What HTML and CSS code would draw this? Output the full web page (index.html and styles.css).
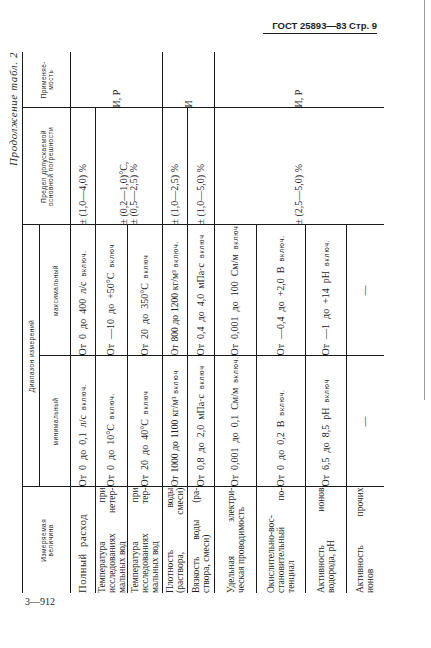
FILE: index.html
```html
<!DOCTYPE html>
<html lang="ru">
<head>
<meta charset="utf-8">
<title>ГОСТ 25893—83 Стр. 9</title>
<link rel="stylesheet" href="styles.css">
</head>
<body>
<div class="page">
  <div class="content">
    <div class="doc-head">ГОСТ 25893—83 Стр. 9</div>
    <div class="sheet">
      <div class="frame">
        <div class="caption">Продолжение табл. 2</div>
        <table class="tbl">
          <colgroup>
            <col class="w-name"><col class="w-min"><col class="w-max"><col class="w-err"><col class="w-use">
          </colgroup>
          <thead>
            <tr class="rh1">
              <th rowspan="2" class="hname">Измеряемая<br>величина</th>
              <th colspan="2" class="hrange">Диапазон измерений</th>
              <th rowspan="2" class="herr">Предел допускаемой<br>основной погрешности</th>
              <th rowspan="2" class="huse">Применяе-<br>мость</th>
            </tr>
            <tr class="rh2">
              <th class="hsub">минимальный</th>
              <th class="hsub">максимальный</th>
            </tr>
          </thead>
          <tbody>
            <tr class="r1">
              <td class="name"><span class="big">Полный расход</span></td>
              <td class="rng r1min">От 0 до 0,1 л/с <span class="v">включ.</span></td>
              <td class="rng">От 0 до 400 л/с <span class="v">включ.</span></td>
              <td class="err">± (1,0—4,0) %</td>
              <td class="use" rowspan="3">И, Р</td>
            </tr>
            <tr class="r2">
              <td class="name"><span class="j">Температура при</span><span class="j">исследованиях нетер-</span><span class="l">мальных вод</span></td>
              <td class="rng">От 0 до 10°С <span class="v">включ.</span></td>
              <td class="rng">От —10 до +50°С <span class="v">включ</span></td>
              <td class="err" rowspan="2"><span class="l">± (0,2—1,0)°С,</span><span class="l">± (0,5—2,5) %</span></td>
            </tr>
            <tr class="r3">
              <td class="name"><span class="j">Температура при</span><span class="j">исследованиях тер-</span><span class="l">мальных вод</span></td>
              <td class="rng">От 20 до 40°С <span class="v">включ</span></td>
              <td class="rng">От 20 до 350°С <span class="v">включ</span></td>
            </tr>
            <tr class="r4">
              <td class="name"><span class="j">Плотность воды</span><span class="j">(раствора, смеси)</span></td>
              <td class="rng tight">От 1000 до 1100 кг/м³ <span class="v">включ</span></td>
              <td class="rng tight">От 800 до 1200 кг/м³ <span class="v">включ.</span></td>
              <td class="err">± (1,0—2,5) %</td>
              <td class="use" rowspan="2">И</td>
            </tr>
            <tr class="r5">
              <td class="name"><span class="j">Вязкость воды (ра-</span><span class="l">створа, смеси)</span></td>
              <td class="rng">От 0,8 до 2,0 мПа·с <span class="v">включ</span></td>
              <td class="rng">От 0,4 до 4,0 мПа·с <span class="v">включ</span></td>
              <td class="err">± (1,0—5,0) %</td>
            </tr>
            <tr class="r6">
              <td class="name"><span class="j">Удельная электри-</span><span class="l">ческая проводимость</span></td>
              <td class="rng">От 0,001 до 0,1 См/м <span class="v">включ.</span></td>
              <td class="rng up">От 0,001 до 100 См/м <span class="v">включ.</span></td>
              <td class="err err-wide last" rowspan="4">± (2,5—5,0) %</td>
              <td class="use last" rowspan="4">И, Р</td>
            </tr>
            <tr class="r7">
              <td class="name"><span class="j">Окислительно-вос-</span><span class="j">становительный по-</span><span class="l">тенциал</span></td>
              <td class="rng">От 0 до 0,2 В <span class="v">включ.</span></td>
              <td class="rng">От —0,4 до +2,0 В <span class="v">включ.</span></td>
            </tr>
            <tr class="r8">
              <td class="name"><span class="j">Активность ионов</span><span class="l">водорода, pH</span></td>
              <td class="rng">От 6,5 до 8,5 pH <span class="v">включ</span></td>
              <td class="rng up">От —1 до +14 pH <span class="v">включ.</span></td>
            </tr>
            <tr class="r9">
              <td class="name last"><span class="j">Активность прочих</span><span class="l">ионов</span></td>
              <td class="dash last">—</td>
              <td class="dash last">—</td>
            </tr>
          </tbody>
        </table>
      </div>
    </div>
    <div class="doc-foot">3—912</div>
  </div>
  <div class="edge"></div>
</div>
</body>
</html>
```

FILE: styles.css
```css
* { box-sizing: border-box; }
html, body { margin: 0; padding: 0; background: #ffffff; }
body {
  font-family: "Liberation Serif", "DejaVu Serif", serif;
  color: #1e1e1e;
}
.page {
  display: flex;
  align-items: flex-start;
  width: 431px;
  height: 648px;
  overflow: hidden;
}
.content { width: 424px; flex: none; }
.edge {
  flex: none;
  width: 1px;
  height: 400px;
  background: #9a9a9a;
}
.doc-head {
  margin-left: 263px;
  width: 114px;
  padding-top: 20px;
  padding-bottom: 2px;
  border-bottom: 1px solid #222;
  font-family: "Liberation Sans", Arial, sans-serif;
  font-weight: bold;
  font-size: 9.5px;
  line-height: 11px;
  text-align: right;
}
.sheet {
  margin-top: 18px;
  margin-left: 5px;
  width: 378px;
  height: 541px;
}
.frame {
  width: 541px;
  height: 378px;
  transform-origin: 0 0;
  transform: translateY(541px) rotate(-90deg);
}
.caption {
  height: 17px;
  padding-top: 2px;
  font-style: italic;
  font-size: 11px;
  line-height: 12px;
  letter-spacing: 0.6px;
  text-align: right;
}
.tbl {
  width: 541px;
  table-layout: fixed;
  border-collapse: collapse;
  border-top: 1px solid #1a1a1a;
}
.w-name { width: 106px; }
.w-min { width: 131px; }
.w-max { width: 131px; }
.w-err { width: 117px; }
.w-use { width: 56px; }

.tbl th, .tbl td {
  padding: 0;
  border-left: 1px solid #1a1a1a;
  border-right: none;
  border-top: none;
  border-bottom: 1px solid #1a1a1a;
  vertical-align: middle;
}
.tbl .hname, .tbl .name { border-left: none; }
.tbl .last { border-bottom: none; }

.tbl th {
  font-family: "Liberation Sans", Arial, sans-serif;
  font-weight: normal;
  font-size: 6.5px;
  line-height: 7px;
  letter-spacing: 0.5px;
  text-align: center;
}
.rh1 { height: 17px; }
.rh2 { height: 31px; }
.hrange { padding-left: 60px; }

.r1 { height: 25px; }
.r2 { height: 32px; }
.r3 { height: 35px; }
.r4 { height: 25px; }
.r5 { height: 27px; }
.r6 { height: 42px; }
.r7 { height: 49px; }
.r8 { height: 41px; }
.r9 { height: 37px; }

.tbl td {
  font-size: 10px;
  line-height: 10px;
  white-space: nowrap;
}
.name { padding: 0 2px 0 1px; }
.tbl td.name { font-size: 9.5px; line-height: 10px; letter-spacing: 0; }
.name span { display: block; }
.name .j { text-align: justify; text-align-last: justify; }
.name .l { text-align: left; }
.name .big { font-size: 10.5px; letter-spacing: 0.6px; word-spacing: 3px; }

.rng { padding-left: 4px; word-spacing: 2.5px; }
.tbl td.tight { font-size: 9.5px; word-spacing: 0.5px; }
.r1min { padding-left: 9px; }
.up { padding-bottom: 18px; }
.v {
  font-family: "Liberation Sans", Arial, sans-serif;
  font-size: 7px;
  letter-spacing: 0.8px;
  word-spacing: 0;
}
.err { padding-left: 2px; }
.err span { display: block; }
.err-wide { padding-left: 12px; }
.use { padding-left: 11px; }
.dash { text-align: center; }

.doc-foot {
  margin-top: 3px;
  margin-left: 25px;
  font-size: 10px;
  line-height: 12px;
}
```
